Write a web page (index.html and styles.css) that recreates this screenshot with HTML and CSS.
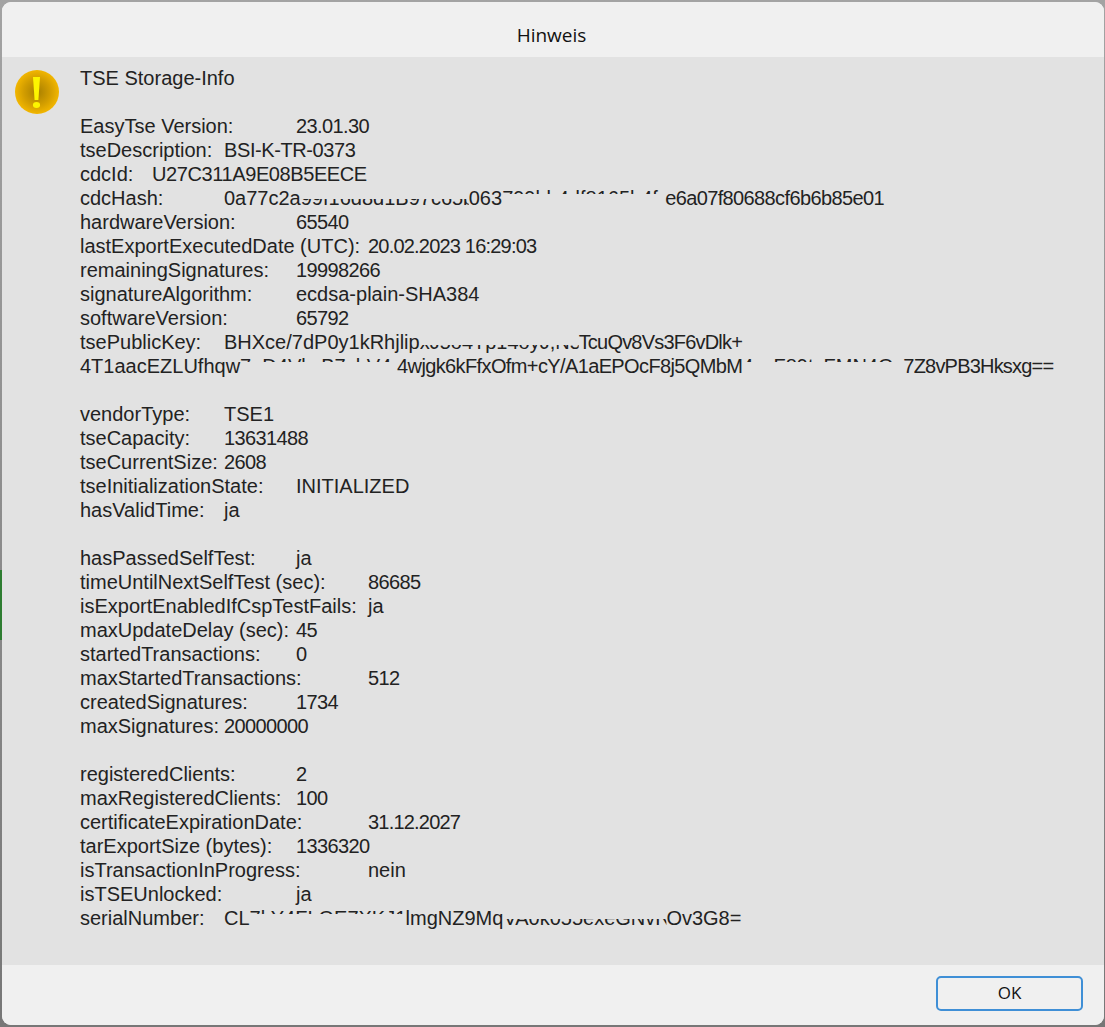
FILE: index.html
```html
<!DOCTYPE html>
<html lang="de">
<head>
    <meta charset="UTF-8">
    <meta name="viewport" content="width=device-width, initial-scale=1.0">
    <title>Hinweis</title>
    <link rel="stylesheet" href="styles.css">
</head>
<body>

    <div class="dialog">
        <header class="title-bar">Hinweis</header>

        <main class="content">
            <svg class="warn-icon" width="46" height="46" viewBox="0 0 46 46" aria-hidden="true">
                <defs>
                    <radialGradient id="warnFill" cx="50%" cy="50%" r="50%">
                        <stop offset="0%" stop-color="#a87f00"/>
                        <stop offset="60%" stop-color="#d29d00"/>
                        <stop offset="100%" stop-color="#f2b600"/>
                    </radialGradient>
                </defs>
                <circle cx="23" cy="22" r="22" fill="url(#warnFill)"/>
                <path d="M19 7h7l-1.6 23h-3.8z" fill="#fdf500"/>
                <ellipse cx="22.5" cy="35" rx="3.6" ry="3" fill="#fdf500"/>
            </svg>
<pre class="info">TSE Storage-Info

EasyTse Version:	<span class="num">23.01.30</span>
tseDescription:	<span class="tight">BSI-K-TR-0373</span>
cdcId:	<span class="tight">U27C311A9E08B5EECE</span>
cdcHash:	0a77c2a<span class="cut-top w-168">99f16d8d1B97c65b</span>063<span class="cut-bottom w-163">799bb4df8165b4f</span><span class="num">e6a07f80688cf6b6b85e01</span>
hardwareVersion:	<span class="num">65540</span>
lastExportExecutedDate (UTC):	<span class="tighter">20.02.2023 16:29:03</span>
remainingSignatures:	<span class="num">19998266</span>
signatureAlgorithm:	ecdsa-plain-SHA384
softwareVersion:	<span class="num">65792</span>
tsePublicKey:	BHXce/7dP0y1kRhjlip<span class="cut-low w-159">xJ5o4Tp14oyJ,N5</span><span class="tighter">TcuQv8Vs3F6vDlk+</span>
4T1aacEZLUfhqw<span class="cut-bottom w-157">7aD4VkzB7vhV4</span><span class="num">4wjgk6kFfxOfm+cY/A1aEPOcF8j5QMbM</span><span class="cut-bottom w-161">4xcF89tzFMN4Q</span><span class="tighter">7Z8vPB3Hksxg==</span>

vendorType:	TSE1
tseCapacity:	<span class="num">13631488</span>
tseCurrentSize:	<span class="num">2608</span>
tseInitializationState:	INITIALIZED
hasValidTime:	ja

hasPassedSelfTest:	ja
timeUntilNextSelfTest (sec):	<span class="num">86685</span>
isExportEnabledIfCspTestFails:	ja
maxUpdateDelay (sec):	<span class="num">45</span>
startedTransactions:	<span class="num">0</span>
maxStartedTransactions:	<span class="num">512</span>
createdSignatures:	<span class="num">1734</span>
maxSignatures:	<span class="num">20000000</span>

registeredClients:	<span class="num">2</span>
maxRegisteredClients:	<span class="num">100</span>
certificateExpirationDate:	<span class="tighter">31.12.2027</span>
tarExportSize (bytes):	<span class="num">1336320</span>
isTransactionInProgress:	nein
isTSEUnlocked:	ja
serialNumber:	CL<span class="cut-bottom w-156">7kY4FLOE7XKJ1</span>lmgNZ9Mq<span class="cut-top w-163">VA0k055exeGNvR</span>Ov3G8=</pre>
        </main>

        <footer class="button-bar">
            <button class="ok-button">OK</button>
        </footer>
    </div>

</body>
</html>
```
FILE: styles.css
```css
html, body {
    height: 100%;
}

body {
    margin: 0;
    padding: 2px 1px 2px 2px;
    box-sizing: border-box;
    background:
        linear-gradient(#2e7d32, #2e7d32) left 570px / 2px 70px no-repeat,
        linear-gradient(#a3a3a3, #777);
}

.dialog {
    height: 100%;
    display: flex;
    flex-direction: column;
    background: #f0f0f0;
    border-radius: 9px;
    overflow: hidden;
}

.title-bar {
    height: 45px;
    padding: 10px 3px 0 0;
    flex: none;
    display: flex;
    align-items: center;
    justify-content: center;
    font-family: "Open Sans", sans-serif;
    font-size: 19px;
    color: #111;
    background: #f0f0f0;
}

.content {
    flex: 1;
    display: flex;
    align-items: flex-start;
    padding: 9px 0 0 12px;
    background: #e2e2e2;
}

.warn-icon {
    flex: none;
    margin-top: 4px;
}

.info {
    margin: 0 0 0 20px;
    font-family: "Liberation Sans", Arial, sans-serif;
    font-size: 20px;
    line-height: 24px;
    color: #222;
    tab-size: 72px;
}

/* Ziffern sind im Original schmaler */
.num {
    letter-spacing: -0.62px;
}

.tight {
    letter-spacing: -0.4px;
}

.tighter {
    letter-spacing: -0.8px;
}

.cut-top,
.cut-bottom,
.cut-low {
    display: inline-block;
    line-height: 24px;
    vertical-align: bottom;
}

/* Schwaerzung: nur ein Teil der Zeile bleibt sichtbar */
.cut-top {
    clip-path: inset(13px 0 0 0);
}

.cut-bottom {
    clip-path: inset(0 0 16px 0);
}

.cut-low {
    clip-path: inset(15px 0 0 0);
}

.w-156 { width: 156px; }
.w-157 { width: 157px; }
.w-159 { width: 159px; }
.w-161 { width: 161px; }
.w-163 { width: 163px; }
.w-168 { width: 168px; }

.button-bar {
    height: 60px;
    flex: none;
    box-sizing: border-box;
    display: flex;
    align-items: center;
    justify-content: flex-end;
    padding: 0 21px 3px 0;
    background: #f0f0f0;
}

.ok-button {
    width: 147px;
    height: 35px;
    padding: 0 0 3px;
    font-family: "Open Sans", sans-serif;
    font-size: 17px;
    color: #111;
    background: #f0f0f0;
    border: 2px solid #3f8fd6;
    border-radius: 5px;
}
```
